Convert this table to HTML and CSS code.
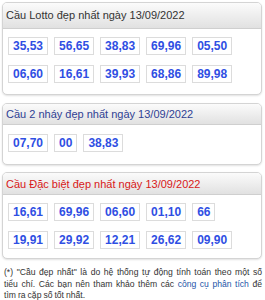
FILE: index.html
```html
<!DOCTYPE html>
<html lang="vi">
<head>
<meta charset="utf-8">
<title>Cầu Lotto</title>
<link rel="stylesheet" href="styles.css">
</head>
<body>
<section class="panel panel-lotto">
  <div class="panel-head">Cầu Lotto đẹp nhất ngày 13/09/2022</div>
  <div class="panel-body">
    <div class="row">
      <span class="num">35,53</span><span class="num">56,65</span><span class="num">38,83</span><span class="num">69,96</span><span class="num">05,50</span>
    </div>
    <div class="row">
      <span class="num">06,60</span><span class="num">16,61</span><span class="num">39,93</span><span class="num">68,86</span><span class="num">89,98</span>
    </div>
  </div>
</section>
<section class="panel panel-nhay">
  <div class="panel-head head-blue">Cầu 2 nháy đẹp nhất ngày 13/09/2022</div>
  <div class="panel-body">
    <div class="row">
      <span class="num">07,70</span><span class="num">00</span><span class="num">38,83</span>
    </div>
  </div>
</section>
<section class="panel panel-db">
  <div class="panel-head head-red">Cầu Đặc biệt đẹp nhất ngày 13/09/2022</div>
  <div class="panel-body">
    <div class="row">
      <span class="num">16,61</span><span class="num">69,96</span><span class="num">06,60</span><span class="num">01,10</span><span class="num">66</span>
    </div>
    <div class="row">
      <span class="num">19,91</span><span class="num">29,92</span><span class="num">12,21</span><span class="num">26,62</span><span class="num">09,90</span>
    </div>
  </div>
</section>
<p class="note">(*) "Cầu đẹp nhất" là do hệ thống tự động tính toán theo một số tiểu&nbsp;chí. Các bạn nên tham khảo thêm các <a href="#">công cụ phân tích</a> để tìm&nbsp;ra cặp số tốt nhất.</p>
</body>
</html>
```

FILE: styles.css
```css
html, body {
  margin: 0;
  background: #fff;
}
body {
  padding: 2px 3px 0 2px;
  font-family: "Liberation Sans", Arial, sans-serif;
  color: #333;
}
.panel {
  border: 1px solid #d4d4d4;
  border-radius: 5px;
  background: #fff;
  box-shadow: 0 1px 2px rgba(0,0,0,0.12);
  overflow: hidden;
}
.panel + .panel {
  margin-top: 8px;
}
.panel-db {
  margin-top: 7px !important;
}
.panel-head {
  background: linear-gradient(#fbfbfb, #e1e1e1);
  border-bottom: 1px solid #cfcfcf;
  font-size: 11px;
  padding-left: 3px;
  height: 25px;
  line-height: 25px;
  color: #333;
  white-space: nowrap;
}
.panel-nhay .panel-head {
  height: 20px;
  line-height: 20px;
}
.panel-db .panel-head {
  height: 21px;
  line-height: 22px;
}
.head-blue {
  color: #2f3f94;
}
.head-red {
  color: #d81818;
}
.panel-body {
  padding: 8px 5px 11px;
  display: flex;
  flex-direction: column;
  gap: 10px;
}
.panel-nhay .panel-body {
  padding: 9px 5px 12px;
}
.panel-db .panel-body {
  padding: 8px 5px 9px;
}
.row {
  display: flex;
  gap: 6px;
}
.num {
  display: inline-block;
  border: 1px solid #dcdcdc;
  padding: 0 4px;
  height: 16px;
  line-height: 17px;
  font-size: 12px;
  font-weight: bold;
  color: #2f4fe3;
  background: #fff;
}
.note {
  margin: 8px 0 0 2px;
  font-size: 8.6px;
  word-spacing: -0.4px;
  line-height: 11.5px;
  text-align: justify;
  color: #333;
}
.note a {
  color: #1d55a8;
  text-decoration: none;
}
```
